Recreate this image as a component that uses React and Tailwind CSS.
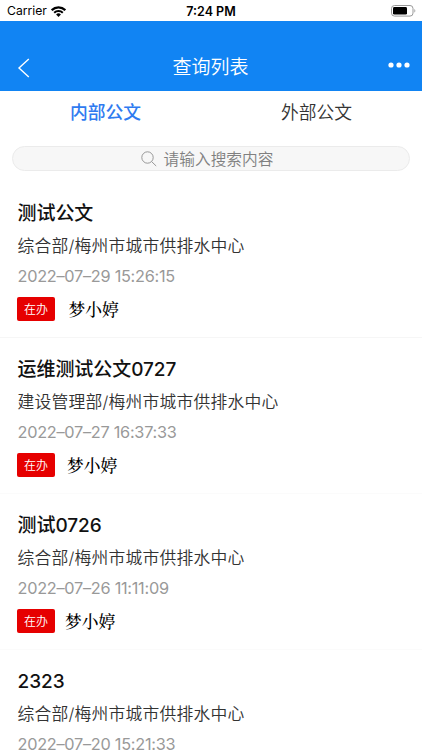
import React, { useState } from "react";

const documents = [
  {
    id: 1,
    title: "测试公文",
    dept: "综合部/梅州市城市供排水中心",
    time: "2022–07–29 15:26:15",
    nameClass: "ml-[13.5px]",
    dividerClass: "border-[#f6f6f6]",
    status: "在办",
    handler: "梦小婷",
  },
  {
    id: 2,
    title: "运维测试公文0727",
    dept: "建设管理部/梅州市城市供排水中心",
    time: "2022–07–27 16:37:33",
    nameClass: "ml-[12px]",
    dividerClass: "border-[#fbfbfb]",
    status: "在办",
    handler: "梦小婷",
  },
  {
    id: 3,
    title: "测试0726",
    dept: "综合部/梅州市城市供排水中心",
    time: "2022–07–26 11:11:09",
    nameClass: "ml-[10px]",
    dividerClass: "border-[#fbfbfb]",
    status: "在办",
    handler: "梦小婷",
  },
  {
    id: 4,
    title: "2323",
    dept: "综合部/梅州市城市供排水中心",
    time: "2022–07–20 15:21:33",
    dividerClass: "border-[#fbfbfb]",
  },
];

const StatusBar = () => (
  <div className="grid h-[21px] shrink-0 grid-cols-3 items-center bg-white text-[12.5px] text-black">
    <div className="flex items-center gap-[4px] pl-[7px] pt-[2px]">
      <span className="text-[12.2px] leading-none">Carrier</span>
      <svg width="15" height="11" viewBox="0 0 15 11" fill="none" stroke="#000">
        <path d="M.7 4.2a9.6 9.6 0 0 1 13.6 0" strokeWidth="2.2" />
        <path d="M3.2 6.8a6.1 6.1 0 0 1 8.6 0" strokeWidth="2" />
        <path d="M7.5 10.9 5.1 8.5a3.4 3.4 0 0 1 4.8 0Z" fill="#000" stroke="none" />
      </svg>
    </div>
    <span className="pt-[3px] text-center font-semibold leading-none">7:24 PM</span>
    <div className="flex justify-end pr-[6px]">
      <svg width="25" height="12" viewBox="0 0 25 12">
        <rect x="0.5" y="0.5" width="21.5" height="10.6" rx="3" fill="none" stroke="#999" />
        <rect x="2" y="2" width="14" height="7.6" rx="1.4" fill="#000" />
        <path d="M23.4 4v3.6c1.2-.4 1.2-3.2 0-3.6Z" fill="#999" />
      </svg>
    </div>
  </div>
);

const Header = () => (
  <header className="flex h-[70px] shrink-0 items-end justify-between bg-[#1184f3] text-white">
    <button className="mb-[13px] ml-[17px] w-[22px]">
      <svg width="13" height="20" viewBox="0 0 13 20" fill="none" stroke="#fff" strokeWidth="1.4">
        <path d="M11.8 1 2 10l9.8 9" />
      </svg>
    </button>
    <h1 className="mb-[10px] mr-[6px] text-[19px] font-[350] leading-[27px]">查询列表</h1>
    <button className="mb-[23px] mr-[12px]">
      <svg width="22" height="6" viewBox="0 0 22 6" fill="#fff">
        <circle cx="3" cy="3" r="2.6" />
        <circle cx="11" cy="3" r="2.6" />
        <circle cx="19" cy="3" r="2.6" />
      </svg>
    </button>
  </header>
);

const DocumentItem = ({ item }) => (
  <li
    className={`h-[156px] shrink-0 border-b pl-[17px] pt-[18px] ${item.dividerClass}`}
  >
    <h2 className="pl-[0.5px] text-[19px] font-medium leading-7 tracking-[-0.05px] text-[#111]">
      {item.title}
    </h2>
    <p className="mt-[5px] pl-[0.5px] text-[16.8px] font-[350] leading-[26px] tracking-[0.22px] text-[#333]">
      {item.dept}
    </p>
    <p className="mt-[5px] pl-[0.5px] text-[16.3px] leading-[24px] tracking-[-0.27px] text-[#999]">
      {item.time}
    </p>
    {item.status && (
      <div className="mt-[9px] flex h-[24px] items-center">
        <span className="h-[24px] w-[38px] rounded-[2px] bg-[#e60000] text-center text-[12px] font-[350] leading-[25px] text-white">
          {item.status}
        </span>
        <span
          className={`font-['Kaiti_SC','STKaiti','Noto_Serif_CJK_SC','Noto_Sans_CJK_SC',serif] text-[16.8px] font-medium leading-[24px] text-black ${item.nameClass}`}
        >
          {item.handler}
        </span>
      </div>
    )}
  </li>
);

export default function App() {
  const [tab, setTab] = useState("inner");
  const tabs = [
    { key: "inner", label: "内部公文" },
    { key: "outer", label: "外部公文" },
  ];

  return (
    <div className="flex h-[750px] w-[422px] flex-col overflow-hidden bg-white font-['Inter','Noto_Sans_CJK_SC',sans-serif]">
      <StatusBar />
      <Header />

      <nav className="grid h-[43px] shrink-0 grid-cols-2 pt-px">
        {tabs.map((t) => (
          <button
            key={t.key}
            onClick={() => setTab(t.key)}
            className={
              tab === t.key
                ? "text-[17.8px] font-medium text-[#2f7bf0]"
                : "text-[17.8px] font-[350] text-[#333]"
            }
          >
            {t.label}
          </button>
        ))}
      </nav>

      <div className="mx-[12px] mt-[12px] flex h-[25px] shrink-0 items-center justify-center gap-[7px] rounded-full border border-[#ebebeb] bg-[#f7f7f7] pr-[8px] text-[15.7px] font-[350] leading-none text-[#808080]">
        <svg width="16" height="16" viewBox="0 0 16 16" fill="none" stroke="#8c8c8c" strokeWidth="0.9">
          <circle cx="6.5" cy="6.5" r="5.7" />
          <path d="m10.7 10.7 4.5 4.3" />
        </svg>
        <span className="pt-[2px]">请输入搜索内容</span>
      </div>

      <ul className="mt-[11px] flex flex-col">
        {documents.map((item) => (
          <DocumentItem key={item.id} item={item} />
        ))}
      </ul>
    </div>
  );
}
